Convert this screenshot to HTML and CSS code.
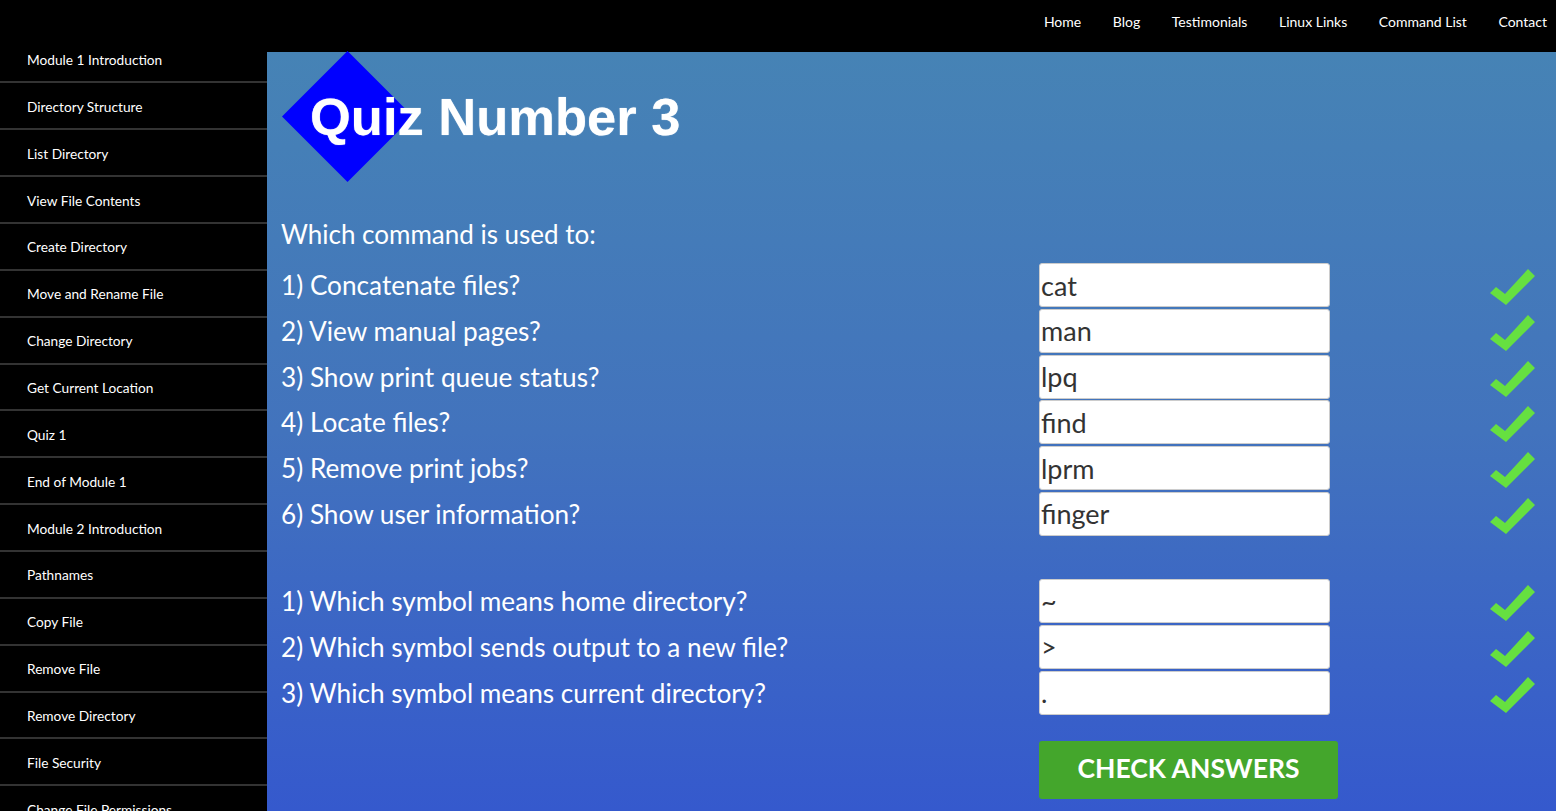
FILE: index.html
```html
<!DOCTYPE html>
<html lang="en">
<head>
<meta charset="utf-8">
<title>Quiz Number 3</title>
<link rel="stylesheet" href="styles.css">
</head>
<body>
<header class="topbar">
  <nav class="topnav">
    <a href="#">Home</a>
    <a href="#">Blog</a>
    <a href="#">Testimonials</a>
    <a href="#">Linux Links</a>
    <a href="#">Command List</a>
    <a href="#">Contact</a>
  </nav>
</header>
<div class="layout">
  <aside class="sidebar">
    <a class="side-item first" href="#">Module 1 Introduction</a>
    <a class="side-item" href="#">Directory Structure</a>
    <a class="side-item" href="#">List Directory</a>
    <a class="side-item" href="#">View File Contents</a>
    <a class="side-item" href="#">Create Directory</a>
    <a class="side-item" href="#">Move and Rename File</a>
    <a class="side-item" href="#">Change Directory</a>
    <a class="side-item" href="#">Get Current Location</a>
    <a class="side-item" href="#">Quiz 1</a>
    <a class="side-item" href="#">End of Module 1</a>
    <a class="side-item" href="#">Module 2 Introduction</a>
    <a class="side-item" href="#">Pathnames</a>
    <a class="side-item" href="#">Copy File</a>
    <a class="side-item" href="#">Remove File</a>
    <a class="side-item" href="#">Remove Directory</a>
    <a class="side-item" href="#">File Security</a>
    <a class="side-item" href="#">Change File Permissions</a>
  </aside>
  <main class="content">
    <div class="banner">
      <svg class="diamond" width="131" height="131" viewBox="0 0 132 132"><polygon points="66,0 132,66 66,132 0,66" fill="#0000ff"/></svg>
      <h1 class="title">Quiz Number 3</h1>
    </div>
    <p class="lead">Which command is used to:</p>
    <div class="group">
      <div class="row"><span class="q">1) Concatenate files?</span><input class="ans" value="cat"><svg class="tick" viewBox="0 0 46 38"><polygon points="1,25 7,19 16,26 39,1 46,8 17,37"/></svg></div>
      <div class="row"><span class="q">2) View manual pages?</span><input class="ans" value="man"><svg class="tick" viewBox="0 0 46 38"><polygon points="1,25 7,19 16,26 39,1 46,8 17,37"/></svg></div>
      <div class="row"><span class="q">3) Show print queue status?</span><input class="ans" value="lpq"><svg class="tick" viewBox="0 0 46 38"><polygon points="1,25 7,19 16,26 39,1 46,8 17,37"/></svg></div>
      <div class="row"><span class="q">4) Locate files?</span><input class="ans" value="find"><svg class="tick" viewBox="0 0 46 38"><polygon points="1,25 7,19 16,26 39,1 46,8 17,37"/></svg></div>
      <div class="row"><span class="q">5) Remove print jobs?</span><input class="ans" value="lprm"><svg class="tick" viewBox="0 0 46 38"><polygon points="1,25 7,19 16,26 39,1 46,8 17,37"/></svg></div>
      <div class="row"><span class="q">6) Show user information?</span><input class="ans" value="finger"><svg class="tick" viewBox="0 0 46 38"><polygon points="1,25 7,19 16,26 39,1 46,8 17,37"/></svg></div>
    </div>
    <div class="group second">
      <div class="row"><span class="q">1) Which symbol means home directory?</span><input class="ans" value="~"><svg class="tick" viewBox="0 0 46 38"><polygon points="1,25 7,19 16,26 39,1 46,8 17,37"/></svg></div>
      <div class="row"><span class="q">2) Which symbol sends output to a new file?</span><input class="ans" value="&gt;"><svg class="tick" viewBox="0 0 46 38"><polygon points="1,25 7,19 16,26 39,1 46,8 17,37"/></svg></div>
      <div class="row"><span class="q">3) Which symbol means current directory?</span><input class="ans" value="."><svg class="tick" viewBox="0 0 46 38"><polygon points="1,25 7,19 16,26 39,1 46,8 17,37"/></svg></div>
    </div>
    <div class="actions">
      <button class="check-btn" type="button">CHECK ANSWERS</button>
    </div>
  </main>
</div>
</body>
</html>
```
FILE: styles.css
```css
html, body {
  margin: 0;
  padding: 0;
  height: 100%;
  overflow: hidden;
}
body {
  font-family: Lato, "Open Sans", sans-serif;
  background: #000;
  color: #fff;
}
a { color: #fff; text-decoration: none; }

.topbar {
  height: 52px;
  background: #000;
  display: flex;
  justify-content: flex-end;
}
.topnav {
  display: flex;
  gap: 31.6px;
  padding: 13px 9px 0 0;
  font-size: 14px;
  line-height: 18px;
  height: 18px;
}

.layout {
  display: flex;
  height: calc(100vh - 52px);
}
.sidebar {
  width: 267px;
  flex: none;
  background: #000;
  display: flex;
  flex-direction: column;
}
.side-item {
  display: block;
  padding: 14.5px 0 13.37px 27px;
  line-height: 17px;
  font-size: 13.7px;
  border-bottom: 2px solid #333;
  white-space: nowrap;
}
.side-item.first {
  padding-top: 0;
  line-height: 16px;
}

.content {
  flex: 1;
  background: linear-gradient(180deg, #4683b5 0%, #4273bd 50%, #3559cd 100%);
  padding: 0 0 0 14px;
  min-width: 0;
}

.banner {
  position: relative;
  height: 167px;
}
.diamond {
  position: absolute;
  left: 1px;
  top: -1px;
}
.title {
  position: relative;
  margin: 0;
  padding: 38px 0 0 29px;
  font-family: "Liberation Sans", Arial, sans-serif;
  font-weight: bold;
  font-size: 52.5px;
  line-height: 54px;
  color: #fff;
  text-shadow: 0 0 1px rgba(255,255,255,0.7);
}

.lead {
  margin: 0 0 14px;
  font-size: 26px;
  line-height: 30px;
}

.group {
  display: flex;
  flex-direction: column;
  gap: 1.8px;
}
.group.second {
  margin-top: 43px;
}
.row {
  display: flex;
  align-items: center;
  height: 44px;
}
.q {
  width: 758px;
  flex: none;
  font-size: 26.2px;
  line-height: 30px;
}
.ans {
  width: 291px;
  height: 44px;
  box-sizing: border-box;
  border: 1px solid #ccc;
  border-radius: 3px;
  background: #fff;
  padding: 0 0 0 1px;
  font-family: Lato, "Open Sans", sans-serif;
  font-size: 27px;
  color: #333;
  flex: none;
}
.tick {
  width: 46px;
  height: 38px;
  margin: 4px 0 0 159px;
  fill: #66e040;
  flex: none;
}

.actions {
  margin-top: 26px;
  padding-left: 758px;
}
.check-btn {
  width: 299px;
  height: 58px;
  border: none;
  border-radius: 3px;
  background: #44a62c;
  color: #fff;
  font-family: Lato, "Open Sans", sans-serif;
  font-weight: bold;
  font-size: 26.5px;
  padding: 0 0 3px;
  cursor: pointer;
}
```
